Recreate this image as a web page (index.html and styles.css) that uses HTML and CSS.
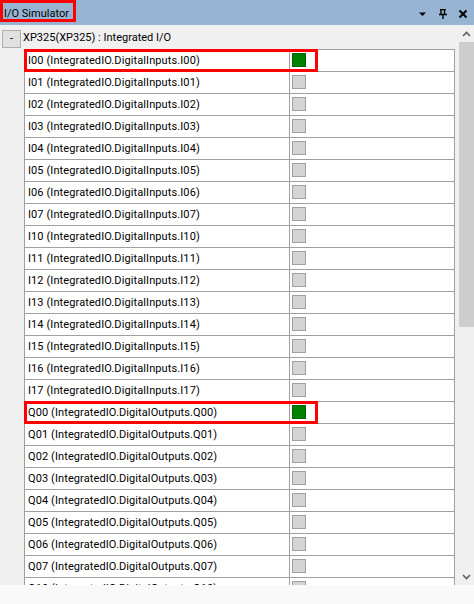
FILE: index.html
```html
<!DOCTYPE html>
<html>
<head>
<meta charset="utf-8">
<link rel="stylesheet" href="styles.css">
</head>
<body>
<div class="window">
  <div class="titlebar">
    <span class="title">I/O Simulator</span>
    <div class="tools">
      <svg class="tool" width="10" height="10" viewBox="0 0 10 10"><path d="M1 3.5 H8 L4.5 7 Z" fill="#000"/></svg>
      <svg class="tool" width="10" height="10" viewBox="0 0 10 10"><path d="M2 0.5 H8 M3 0.5 V5.5 M6.5 0.5 V5.5 M1 5.5 H9 M5 5.5 V10" stroke="#000" stroke-width="1.4" fill="none"/></svg>
      <svg class="tool" width="10" height="10" viewBox="0 0 10 10"><path d="M1.5 1.5 L8.5 8.5 M8.5 1.5 L1.5 8.5" stroke="#000" stroke-width="2" fill="none"/></svg>
    </div>
  </div>
  <div class="main">
    <div class="content">
      <div class="device">
        <span class="collapse">-</span>
        <span class="device-name">XP325(XP325) : Integrated I/O</span>
      </div>
      <div class="grid">
        <div class="row"><div class="name">I00 (IntegratedIO.DigitalInputs.I00)</div><div class="value"><span class="box on"></span></div></div>
        <div class="row"><div class="name">I01 (IntegratedIO.DigitalInputs.I01)</div><div class="value"><span class="box"></span></div></div>
        <div class="row"><div class="name">I02 (IntegratedIO.DigitalInputs.I02)</div><div class="value"><span class="box"></span></div></div>
        <div class="row"><div class="name">I03 (IntegratedIO.DigitalInputs.I03)</div><div class="value"><span class="box"></span></div></div>
        <div class="row"><div class="name">I04 (IntegratedIO.DigitalInputs.I04)</div><div class="value"><span class="box"></span></div></div>
        <div class="row"><div class="name">I05 (IntegratedIO.DigitalInputs.I05)</div><div class="value"><span class="box"></span></div></div>
        <div class="row"><div class="name">I06 (IntegratedIO.DigitalInputs.I06)</div><div class="value"><span class="box"></span></div></div>
        <div class="row"><div class="name">I07 (IntegratedIO.DigitalInputs.I07)</div><div class="value"><span class="box"></span></div></div>
        <div class="row"><div class="name">I10 (IntegratedIO.DigitalInputs.I10)</div><div class="value"><span class="box"></span></div></div>
        <div class="row"><div class="name">I11 (IntegratedIO.DigitalInputs.I11)</div><div class="value"><span class="box"></span></div></div>
        <div class="row"><div class="name">I12 (IntegratedIO.DigitalInputs.I12)</div><div class="value"><span class="box"></span></div></div>
        <div class="row"><div class="name">I13 (IntegratedIO.DigitalInputs.I13)</div><div class="value"><span class="box"></span></div></div>
        <div class="row"><div class="name">I14 (IntegratedIO.DigitalInputs.I14)</div><div class="value"><span class="box"></span></div></div>
        <div class="row"><div class="name">I15 (IntegratedIO.DigitalInputs.I15)</div><div class="value"><span class="box"></span></div></div>
        <div class="row"><div class="name">I16 (IntegratedIO.DigitalInputs.I16)</div><div class="value"><span class="box"></span></div></div>
        <div class="row"><div class="name">I17 (IntegratedIO.DigitalInputs.I17)</div><div class="value"><span class="box"></span></div></div>
        <div class="row"><div class="name">Q00 (IntegratedIO.DigitalOutputs.Q00)</div><div class="value"><span class="box on"></span></div></div>
        <div class="row"><div class="name">Q01 (IntegratedIO.DigitalOutputs.Q01)</div><div class="value"><span class="box"></span></div></div>
        <div class="row"><div class="name">Q02 (IntegratedIO.DigitalOutputs.Q02)</div><div class="value"><span class="box"></span></div></div>
        <div class="row"><div class="name">Q03 (IntegratedIO.DigitalOutputs.Q03)</div><div class="value"><span class="box"></span></div></div>
        <div class="row"><div class="name">Q04 (IntegratedIO.DigitalOutputs.Q04)</div><div class="value"><span class="box"></span></div></div>
        <div class="row"><div class="name">Q05 (IntegratedIO.DigitalOutputs.Q05)</div><div class="value"><span class="box"></span></div></div>
        <div class="row"><div class="name">Q06 (IntegratedIO.DigitalOutputs.Q06)</div><div class="value"><span class="box"></span></div></div>
        <div class="row"><div class="name">Q07 (IntegratedIO.DigitalOutputs.Q07)</div><div class="value"><span class="box"></span></div></div>
        <div class="row"><div class="name">Q10 (IntegratedIO.DigitalOutputs.Q10)</div><div class="value"><span class="box"></span></div></div>
      </div>
    </div>
    <div class="scrollbar">
      <div class="arrow"><svg width="9" height="6" viewBox="0 0 9 6"><path d="M1 5 L4.5 1.5 L8 5" stroke="#606060" stroke-width="1.6" fill="none"/></svg></div>
      <div class="track"><div class="thumb"></div></div>
      <div class="arrow"><svg width="9" height="6" viewBox="0 0 9 6"><path d="M1 1 L4.5 4.5 L8 1" stroke="#606060" stroke-width="1.6" fill="none"/></svg></div>
    </div>
  </div>
  <div class="footer"></div>
  <div class="mark mark-title"></div>
  <div class="mark mark-row mark-i00"></div>
  <div class="mark mark-row mark-q00"></div>
</div>
</body>
</html>
```
FILE: styles.css
```css
html, body {
  margin: 0;
  padding: 0;
}
body {
  font-family: Roboto, "Liberation Sans", Arial, sans-serif;
  font-size: 11px;
  color: #000;
  background: #f9f9f9;
}
.window {
  position: relative;
  width: 474px;
  height: 604px;
  overflow: hidden;
}
.titlebar {
  height: 25px;
  background: #98b4d3;
  display: flex;
  align-items: center;
  justify-content: space-between;
}
.title {
  padding-left: 4px;
  line-height: 25px;
  margin-top: 2px;
}
.tools {
  display: flex;
  align-items: center;
  gap: 10px;
  padding-right: 6px;
  margin-top: 3px;
}
.main {
  height: 560px;
  background: #f0f0f0;
  display: flex;
}
.content {
  width: 459px;
  overflow: hidden;
}
.device {
  height: 24px;
  display: flex;
  align-items: center;
}
.collapse {
  box-sizing: border-box;
  width: 19px;
  height: 18px;
  margin-left: 2px;
  margin-top: 3px;
  border: 1px solid #adadad;
  background: #e1e1e1;
  display: flex;
  align-items: center;
  justify-content: center;
  line-height: 1;
}
.device-name {
  margin-left: 2px;
  margin-top: 0px;
}
.grid {
  margin-left: 24px;
  width: 431px;
  box-sizing: border-box;
  border-left: 1px solid #a0a0a0;
  border-right: 1px solid #a0a0a0;
  border-top: 1px solid #a0a0a0;
  background: #fff;
}
.row {
  display: grid;
  grid-template-columns: 265px 1fr;
  height: 22px;
  box-sizing: border-box;
  border-bottom: 1px solid #a0a0a0;
}
.name {
  padding-left: 3px;
  line-height: 21px;
  white-space: nowrap;
  letter-spacing: 0.1px;
  border-right: 1px solid #a0a0a0;
}
.value {
  padding-left: 2px;
  padding-top: 3px;
}
.box {
  display: block;
  box-sizing: border-box;
  width: 14px;
  height: 14px;
  border: 1px solid #a0a0a0;
  background: #d4d4d4;
}
.box.on {
  border-color: #006400;
  background: #008000;
}
.scrollbar {
  width: 15px;
  display: flex;
  flex-direction: column;
}
.arrow {
  height: 17px;
  display: flex;
  align-items: center;
  justify-content: center;
}
.track {
  flex: 1;
}
.thumb {
  height: 285px;
  background: #cdcdcd;
}
.footer {
  height: 19px;
  background: #f9f9f9;
}
.mark {
  position: absolute;
  box-sizing: border-box;
  border: 3px solid #ff0000;
}
.mark-title {
  left: 0;
  top: 0;
  width: 76px;
  height: 22px;
}
.mark-row {
  left: 24px;
  width: 294px;
  height: 23px;
}
.mark-i00 {
  top: 49px;
}
.mark-q00 {
  top: 401px;
}
```
